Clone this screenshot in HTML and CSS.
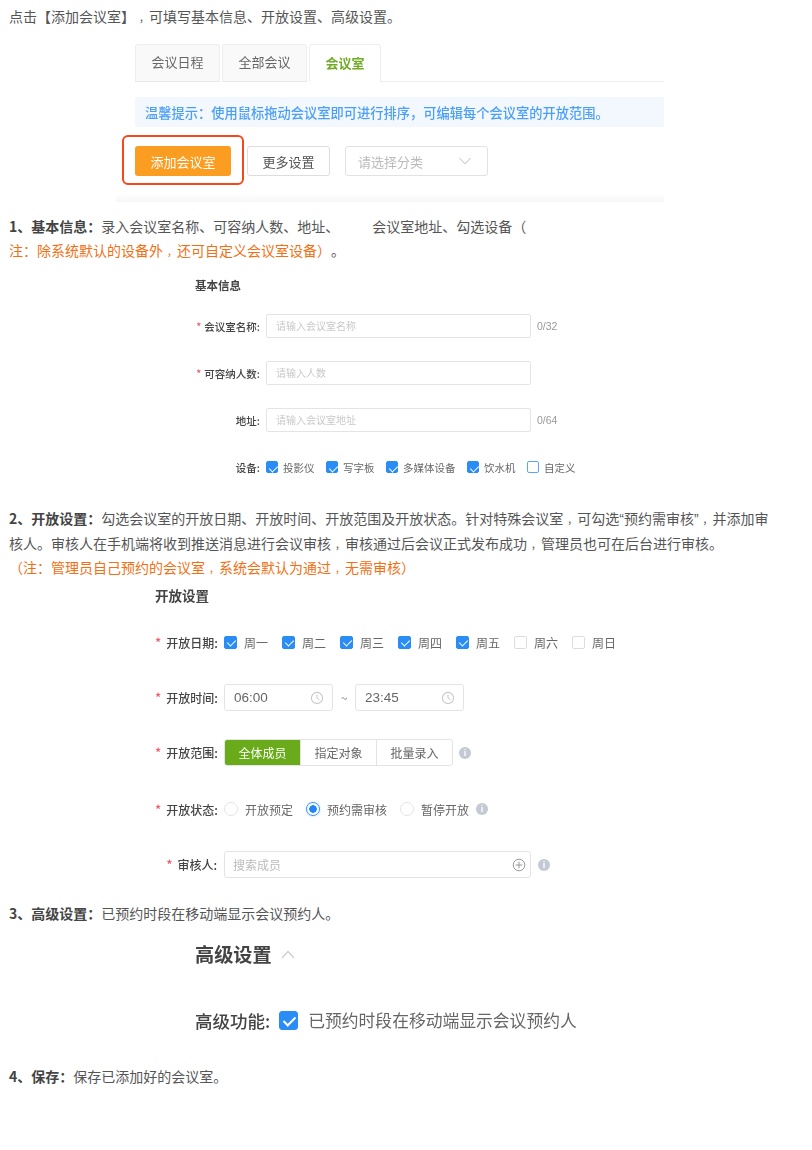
FILE: index.html
```html
<!DOCTYPE html>
<html lang="zh-CN">
<head>
<meta charset="utf-8">
<title>添加会议室</title>
<link rel="stylesheet" href="styles.css">
</head>
<body>
<p class="para">点击【添加会议室】<span class="cm">，</span>可填写基本信息、开放设置、高级设置。</p>

<section class="fig fig-top">
  <div class="tabs">
    <div class="tab">会议日程</div>
    <div class="tab">全部会议</div>
    <div class="tab tab-on">会议室</div>
    <div class="tab-rest"></div>
  </div>
  <div class="tip">温馨提示：使用鼠标拖动会议室即可进行排序，可编辑每个会议室的开放范围。</div>
  <div class="actions">
    <div class="btn btn-add">添加会议室<span class="hl"></span></div>
    <div class="btn btn-more">更多设置</div>
    <div class="btn sel">请选择分类
      <svg class="sel-arrow" width="14" height="8" viewBox="0 0 14 8"><path d="M1.5 1 7 6.8 12.5 1" fill="none" stroke="#bbb" stroke-width="1"/></svg>
    </div>
  </div>
  <div class="strip"></div>
</section>

<p class="para para1"><b>1、基本信息<span class="fw">：</span></b>录入会议室名称、可容纳人数、地址、<span class="gap"></span>会议室地址、勾选设备（<br><span class="orange">注<span class="fw">：</span>除系统默认的设备外<span class="cm">，</span>还可自定义会议室设备）</span>。</p>

<section class="fig fig-basic">
  <h3 class="basic-title">基本信息</h3>
  <div class="b-row">
    <div class="b-label"><i>*</i>会议室名称:</div>
    <div class="b-input">请输入会议室名称</div>
    <span class="count">0/32</span>
  </div>
  <div class="b-row">
    <div class="b-label"><i>*</i>可容纳人数:</div>
    <div class="b-input">请输入人数</div>
  </div>
  <div class="b-row">
    <div class="b-label">地址:</div>
    <div class="b-input">请输入会议室地址</div>
    <span class="count">0/64</span>
  </div>
  <div class="b-row b-devices">
    <div class="b-label">设备:</div>
    <div class="dev"><span class="cb cb-s on"></span>投影仪</div>
    <div class="dev"><span class="cb cb-s on"></span>写字板</div>
    <div class="dev"><span class="cb cb-s on"></span>多媒体设备</div>
    <div class="dev"><span class="cb cb-s on"></span>饮水机</div>
    <div class="dev"><span class="cb cb-s off-blue"></span>自定义</div>
  </div>
</section>

<p class="para para2"><b>2、开放设置<span class="fw">：</span></b>勾选会议室的开放日期、开放时间、开放范围及开放状态。针对特殊会议室<span class="cm">，</span>可勾选<span class="q">“</span>预约需审核<span class="q">”</span><span class="cm">，</span>并添加审<br>核人。审核人在手机端将收到推送消息进行会议审核<span class="cm">，</span>审核通过后会议正式发布成功<span class="cm">，</span>管理员也可在后台进行审核。<br><span class="orange">（注<span class="fw">：</span>管理员自己预约的会议室<span class="cm">，</span>系统会默认为通过<span class="cm">，</span>无需审核）</span></p>

<section class="fig fig-open">
  <h3 class="open-title">开放设置</h3>
  <div class="o-row o-days">
    <div class="o-label"><i>*</i>开放日期:</div>
    <div class="day"><span class="cb on"></span>周一</div>
    <div class="day"><span class="cb on"></span>周二</div>
    <div class="day"><span class="cb on"></span>周三</div>
    <div class="day"><span class="cb on"></span>周四</div>
    <div class="day"><span class="cb on"></span>周五</div>
    <div class="day"><span class="cb"></span>周六</div>
    <div class="day"><span class="cb"></span>周日</div>
  </div>
  <div class="o-row o-time">
    <div class="o-label"><i>*</i>开放时间:</div>
    <div class="time">06:00
      <svg width="14" height="14" viewBox="0 0 14 14"><circle cx="7" cy="7" r="5.6" fill="none" stroke="#c8c8c8" stroke-width="1.1"/><path d="M7 3.6V7.2L9.4 9" fill="none" stroke="#c8c8c8" stroke-width="1"/></svg>
    </div>
    <span class="tilde">~</span>
    <div class="time">23:45
      <svg width="14" height="14" viewBox="0 0 14 14"><circle cx="7" cy="7" r="5.6" fill="none" stroke="#c8c8c8" stroke-width="1.1"/><path d="M7 3.6V7.2L9.4 9" fill="none" stroke="#c8c8c8" stroke-width="1"/></svg>
    </div>
  </div>
  <div class="o-row o-range">
    <div class="o-label"><i>*</i>开放范围:</div>
    <div class="seg">
      <div class="seg-item seg-on">全体成员</div>
      <div class="seg-item">指定对象</div>
      <div class="seg-item">批量录入</div>
    </div>
    <span class="info info-range">i</span>
  </div>
  <div class="o-row o-state">
    <div class="o-label"><i>*</i>开放状态:</div>
    <div class="radio"><span class="rd"></span>开放预定</div>
    <div class="radio"><span class="rd rd-on"></span>预约需审核</div>
    <div class="radio"><span class="rd"></span>暂停开放</div>
    <span class="info">i</span>
  </div>
  <div class="o-row o-review">
    <div class="o-label"><i>*</i>审核人:</div>
    <div class="search">搜索成员
      <svg width="14" height="14" viewBox="0 0 14 14"><circle cx="7" cy="7" r="5.8" fill="none" stroke="#999" stroke-width="1"/><path d="M7 3.6v6.8M3.6 7h6.8" fill="none" stroke="#999" stroke-width="1"/></svg>
    </div>
    <span class="info info-review">i</span>
  </div>
</section>

<p class="para para3"><b>3、高级设置<span class="fw">：</span></b>已预约时段在移动端显示会议预约人。</p>

<section class="fig fig-adv">
  <div class="adv-head">
    <h3 class="adv-title">高级设置</h3>
    <svg width="14" height="9" viewBox="0 0 14 9"><path d="M1 8 7 1.5 13 8" fill="none" stroke="#ccc" stroke-width="1.2"/></svg>
  </div>
  <div class="adv-row">
    <span class="adv-label">高级功能:</span>
    <span class="cb cb-l on"></span>
    <span class="adv-text">已预约时段在移动端显示会议预约人</span>
  </div>
</section>

<p class="para para4"><b>4、保存<span class="fw">：</span></b>保存已添加好的会议室。</p>
</body>
</html>
```

FILE: styles.css
```css
* { box-sizing: border-box; }
html, body { margin: 0; padding: 0; background: #fff; }
body {
  width: 812px;
  height: 1150px;
  overflow: hidden;
  padding: 4px 0 0 9px;
  font-family: "Noto Sans CJK SC", "Liberation Sans", sans-serif;
  color: #555;
}
.para { margin: 0; font-size: 14px; line-height: 24px; color: #555; white-space: nowrap; text-spacing-trim: space-all; }
.para b { color: #444; font-weight: 700; }
.fw { font-family: "Noto Sans CJK JP", sans-serif; }
.cm { display: inline-block; width: 14px; font-size: 10px; line-height: 10px; text-align: right; }
.q { font-family: "Liberation Sans", sans-serif; }
.orange { color: #f27013; }
.gap { display: inline-block; width: 33px; }
.para1 { margin-top: 12px; }
.fig { filter: blur(0.4px); }
h3 { margin: 0; }
i { font-style: normal; color: #f25a6a; }

/* top figure */
.fig-top { margin: 16px 0 0 107px; width: 548px; }
.tabs { display: flex; margin-left: 19px; height: 38px; }
.tab {
  width: 85px; height: 38px; margin-right: 2px; padding-bottom: 3px;
  border: 1px solid #eee; border-bottom: 1px solid #e8e8e8; border-radius: 3px 3px 0 0;
  background: #f9f9f9; font-size: 13px; color: #666;
  display: flex; align-items: center; justify-content: center;
}
.tab-on { width: 72px; margin-right: 0; background: #fff; border-bottom: 0; color: #71ab28; font-weight: 700; }
.tab-rest { flex: 1; border-bottom: 1px solid #eee; }
.tip {
  margin: 15px 0 0 19px; height: 30px; padding-left: 10px;
  background: #f3f8ff; border-radius: 3px 0 0 3px;
  font-size: 13.25px; line-height: 32px; color: #4b9ff5; font-weight: 500; white-space: nowrap;
}
.actions { display: flex; margin: 19px 0 0 19px; height: 30px; }
.btn {
  position: relative; height: 30px; border-radius: 3px; font-size: 13px;
  display: flex; align-items: center; justify-content: center;
}
.btn-add { width: 96px; background: #fa9d20; color: #fff; }
.btn-more { width: 83px; margin-left: 16px; border: 1px solid #ddd; color: #555; }
.sel { width: 143px; margin-left: 15px; border: 1px solid #e2e2e2; color: #bbb; justify-content: space-between; padding: 0 15px 0 12px; }
.hl { position: absolute; left: -13px; top: -11px; width: 122px; height: 50px; border: 2.5px solid #f4481f; border-radius: 6px; }
.strip { margin-top: 18px; height: 8px; background: linear-gradient(#fff, #f6f6f6); }

/* basic info */
.fig-basic { margin: 15px 0 0 186px; height: 229px; }
.basic-title { font-size: 11.5px; line-height: 16px; color: #444; font-weight: 700; }
.b-row { display: flex; align-items: center; height: 24px; margin-top: 23px; }
.basic-title + .b-row { margin-top: 21px; }
.b-label { width: 71px; padding-right: 6px; text-align: right; font-size: 10.5px; color: #444; font-weight: 500; white-space: nowrap; }
.b-label i { margin-right: 3px; }
.b-input {
  width: 265px; height: 24px; padding-left: 9px; border: 1px solid #e4e4e4; border-radius: 2px;
  font-size: 10px; line-height: 22px; color: #c8c8c8; white-space: nowrap;
}
.count { margin-left: 6px; font-size: 10.5px; color: #999; font-family: "Liberation Sans", sans-serif; }
.dev { display: flex; align-items: center; margin-right: 11.5px; font-size: 10.5px; color: #666; white-space: nowrap; }
.cb {
  position: relative; display: inline-block; flex: none; width: 13px; height: 13px; margin-right: 7px;
  border: 1px solid #ddd; border-radius: 2px; background: #fff;
}
.cb.on { background: #2a8df5; border-color: #2a8df5; }
.cb.on::after {
  content: ""; position: absolute; left: 3.5px; top: 1.5px; width: 4px; height: 7px;
  border: solid #fff; border-width: 0 1.5px 1.5px 0; transform: rotate(45deg);
}
.cb-s { width: 12px; height: 12px; margin-right: 5px; }
.cb.off-blue { border-color: #5aa5f5; }

/* open settings */
.fig-open { margin: 6px 0 0 146px; height: 316px; }
.open-title { font-size: 13.5px; line-height: 20px; color: #444; font-weight: 700; }
.o-row { display: flex; align-items: center; font-size: 12px; color: #666; }
.o-label { width: 69px; padding-right: 7px; font-size: 12px; color: #444; white-space: nowrap; text-align: right; font-weight: 500; }
.o-label i { margin-right: 5px; font-size: 13px; }
.o-days { height: 14px; margin-top: 30px; }
.day { display: flex; align-items: center; width: 58px; white-space: nowrap; }
.o-time { height: 27px; margin-top: 35px; }
.time {
  width: 109px; height: 27px; border: 1px solid #e4e4e4; border-radius: 3px; padding: 0 8px 0 9px;
  display: flex; align-items: center; justify-content: space-between;
  font-family: "Liberation Sans", sans-serif; font-size: 13.5px; color: #666;
}
.tilde { width: 22px; text-align: center; color: #888; }
.o-range { height: 27px; margin-top: 28px; }
.seg { display: flex; width: 229px; height: 27px; border: 1px solid #e4e4e4; border-radius: 3px; overflow: hidden; }
.seg-item { flex: 1; display: flex; align-items: center; justify-content: center; border-left: 1px solid #e4e4e4; white-space: nowrap; }
.seg-on { background: #6aab1c; color: #fff; border-left: 0; }
.info {
  width: 12px; height: 12px; border-radius: 50%; background: #c3cad3; color: #fff;
  font: 700 9px/12px "Liberation Sans", sans-serif; text-align: center; flex: none; margin-left: 7px;
}
.info-range { margin-left: 6px; }
.o-state { height: 16px; margin-top: 35px; }
.radio { display: flex; align-items: center; white-space: nowrap; }
.radio + .radio { margin-left: 13px; }
.rd { width: 14px; height: 14px; border: 1px solid #e4e4e4; border-radius: 50%; margin-right: 7px; flex: none; background: #fff; }
.rd-on { border-color: #3a94f5; background: radial-gradient(circle, #1f86f5 0 3.5px, #fff 4px); box-shadow: 0 0 2px #9cc8f8; }
.o-review { height: 27px; margin-top: 34px; }
.search {
  width: 307px; height: 27px; border: 1px solid #e4e4e4; border-radius: 3px; padding: 0 4px 0 8px;
  display: flex; align-items: center; justify-content: space-between; color: #bbb;
}

/* advanced */
.fig-adv { margin: 0 0 0 186px; height: 122px; }
.adv-head { display: flex; align-items: center; height: 24px; margin-top: 17px; }
.adv-title { font-size: 19.2px; line-height: 24px; color: #444; font-weight: 700; margin-right: 9px; }
.adv-row { display: flex; align-items: center; height: 20px; margin-top: 44px; white-space: nowrap; }
.adv-label { font-size: 17.5px; color: #444; font-weight: 500; margin-right: 9px; }
.cb-l { width: 19px; height: 19px; margin-right: 10px; border-radius: 3px; }
.cb.cb-l.on::after { left: 6px; top: 2.5px; width: 5px; height: 10px; border-width: 0 2px 2px 0; }
.adv-text { font-size: 16.8px; color: #666; }
```
